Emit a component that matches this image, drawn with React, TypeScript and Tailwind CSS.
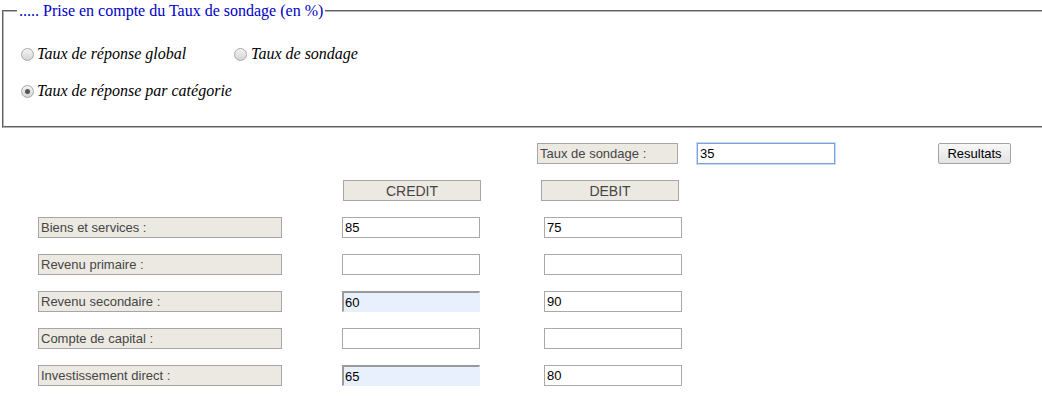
const labels = [
  { name: 'Biens et services :', credit: '85', debit: '75', auto: false },
  { name: 'Revenu primaire :', credit: '', debit: '', auto: false },
  { name: 'Revenu secondaire :', credit: '60', debit: '90', auto: true },
  { name: 'Compte de capital :', credit: '', debit: '', auto: false },
  { name: 'Investissement direct :', credit: '65', debit: '80', auto: true },
];

function Radio({ checked }: { checked?: boolean }) {
  return (
    <span className="flex h-[13px] w-[13px] shrink-0 items-center justify-center rounded-full border border-[#a8a8a8] bg-gradient-to-b from-[#f4f4f4] to-[#d4d4d4]">
      {checked && <span className="h-[5px] w-[5px] rounded-full bg-[#555]" />}
    </span>
  );
}

function Box({ children, className }: { children?: React.ReactNode; className: string }) {
  return (
    <div
      className={
        'flex h-[21px] items-center border border-[#a6a6a6] bg-[#ebe9e2] px-[2px] text-[13px] leading-none text-[#454545] ' +
        className
      }
    >
      {children}
    </div>
  );
}

function Field({ value, auto, className }: { value: string; auto?: boolean; className: string }) {
  return (
    <div
      className={
        'flex h-[21px] items-center text-[13px] leading-none text-black ' +
        (auto
          ? 'border-l-2 border-t-2 border-r border-b border-l-[#9a9a9a] border-t-[#9a9a9a] border-r-[#e8f0fe] border-b-[#e8f0fe] bg-[#e8f0fe] pl-[1px] '
          : 'border border-[#a9a9a9] bg-white pl-[2px] ') +
        className
      }
    >
      {value}
    </div>
  );
}

export default function App() {
  return (
    <div className="w-[1042px] h-[396px] overflow-hidden bg-white font-['Liberation_Sans',Arial,sans-serif]">
      <fieldset className="ml-[2px] mt-[2px] w-[1060px] border-2 [border-style:groove] border-[#b4b4b4] px-[13px] pb-[25px] pt-[24px]">
        <legend className="px-[2px] text-[16px] leading-[18px] text-[#0000c8] font-['Liberation_Serif',serif]">
          ..... Prise en compte du Taux de sondage (en %)
        </legend>
        <div className="flex flex-col gap-[17px] font-['Liberation_Serif',serif] italic text-[16px] text-black">
          <div className="flex h-[20px] items-center">
            <div className="ml-[4px] flex items-center gap-[3px] w-[213px]">
              <Radio />
              <span>Taux de réponse global</span>
            </div>
            <div className="flex items-center gap-[4px]">
              <Radio />
              <span>Taux de sondage</span>
            </div>
          </div>
          <div className="flex h-[20px] items-center">
            <div className="ml-[4px] flex items-center gap-[3px]">
              <Radio checked />
              <span>Taux de réponse par catégorie</span>
            </div>
          </div>
        </div>
      </fieldset>

      <div className="mt-[15px] flex flex-col gap-4">
        <div className="flex items-center">
          <Box className="ml-[537px] w-[141px]">Taux de sondage :</Box>
          <div className="ml-[19px] flex h-[21px] w-[138px] items-center border border-[#7aa3dc] bg-white pl-[2px] text-[13px] leading-none text-black shadow-[0_0_0_1px_#c7d9f3]">
            35
          </div>
          <button className="ml-[103px] flex h-[21px] w-[73px] items-center justify-center rounded-[2px] border border-[#a3a3a3] bg-gradient-to-b from-[#f8f8f8] to-[#e3e3e3] text-[13px] leading-none text-black">
            Resultats
          </button>
        </div>
        <div className="flex items-center">
          <Box className="ml-[343px] w-[138px] justify-center text-[14px]">CREDIT</Box>
          <Box className="ml-[60px] w-[138px] justify-center text-[14px]">DEBIT</Box>
        </div>
        {labels.map((row) => (
          <div key={row.name} className="flex items-center">
            <Box className="ml-[38px] w-[244px]">{row.name}</Box>
            <Field className="ml-[60px] w-[138px]" value={row.credit} auto={row.auto} />
            <Field className="ml-[64px] w-[138px]" value={row.debit} />
          </div>
        ))}
      </div>
    </div>
  );
}
